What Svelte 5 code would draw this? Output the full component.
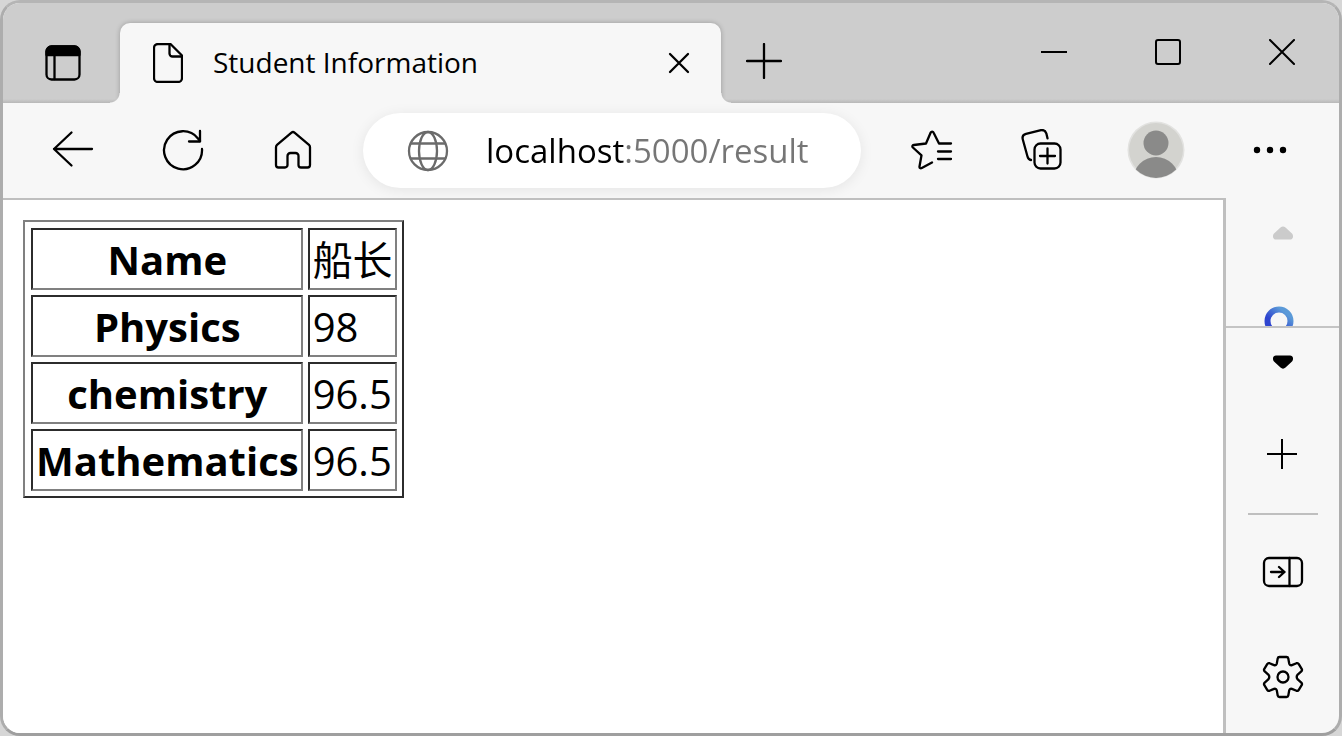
<script>
  let address = $state('localhost:5000/result');

  const student = [
    { label: 'Name', value: '船长' },
    { label: 'Physics', value: '98' },
    { label: 'chemistry', value: '96.5' },
    { label: 'Mathematics', value: '96.5' }
  ];
</script>

<div class="window">
  <header class="titlebar">
    <button class="tab-actions" aria-label="Tab actions menu">
      <svg width="36" height="36" viewBox="0 0 36 36">
        <rect x="1.5" y="1.5" width="33" height="33" rx="5" />
        <path d="M1.5 10V6.5a5 5 0 0 1 5-5h23a5 5 0 0 1 5 5V10z" fill="currentColor" />
        <path d="M9.5 10v24" />
      </svg>
    </button>

    <div class="tab">
      <svg width="30" height="40" viewBox="0 0 30 40">
        <path d="M5 1h12.5L29 12.5V35a4 4 0 0 1-4 4H5a4 4 0 0 1-4-4V5a4 4 0 0 1 4-4z" />
        <path d="M16.5 1v9.5a3 3 0 0 0 3 3H29" />
      </svg>
      <span class="tab-title">Student Information</span>
      <button class="tab-close" aria-label="Close tab">
        <svg width="22" height="22" viewBox="0 0 22 22">
          <path d="M2 2l18 18M20 2L2 20" />
        </svg>
      </button>
    </div>

    <button class="new-tab" aria-label="New tab">
      <svg width="36" height="36" viewBox="0 0 36 36">
        <path d="M18 1v34M1 18h34" />
      </svg>
    </button>

    <div class="window-controls">
      <button aria-label="Minimize">
        <svg width="26" height="26" viewBox="0 0 26 26"><path d="M1 13h24" /></svg>
      </button>
      <button aria-label="Maximize">
        <svg width="26" height="26" viewBox="0 0 26 26">
          <rect x="1" y="1" width="24" height="24" rx="2" />
        </svg>
      </button>
      <button aria-label="Close">
        <svg width="26" height="26" viewBox="0 0 26 26">
          <path d="M1 1l24 24M25 1L1 25" />
        </svg>
      </button>
    </div>
  </header>

  <nav class="toolbar">
    <div class="nav-buttons">
      <button aria-label="Back">
        <svg width="42" height="42" viewBox="0 0 42 42">
          <path d="M40 20H2M19.500 3.500L2 20l17.500 16.500" />
        </svg>
      </button>
      <button aria-label="Refresh">
        <svg width="42" height="42" viewBox="0 0 42 42">
          <path d="M40 20a19 19 0 1 1-4-10.500L38 12" />
          <path d="M38 2v10.500H27" />
        </svg>
      </button>
      <button aria-label="Home">
        <svg width="42" height="42" viewBox="0 0 42 42">
          <path d="M19.500 3.600L5 15.800c-.8.700-1 1.500-1 2.400V36a2.500 2.500 0 0 0 2.500 2.500H13a2.500 2.500 0 0 0 2.500-2.500V27a3 3 0 0 1 3-3h5a3 3 0 0 1 3 3v9a2.500 2.500 0 0 0 2.500 2.500h6.500A2.500 2.500 0 0 0 38 36V18.200c0-.9-.3-1.700-1-2.400L22.500 3.600a2.300 2.300 0 0 0-3 0z" />
        </svg>
      </button>
    </div>

    <div class="address-bar">
      <svg width="42" height="42" viewBox="0 0 42 42">
        <circle cx="21" cy="21" r="19" />
        <ellipse cx="21" cy="21" rx="9" ry="19" />
        <path d="M4 13.500h34M4 28.500h34" />
      </svg>
      <input type="text" aria-label="Address bar" spellcheck="false" bind:value={address} />
    </div>

    <div class="tool-buttons">
      <button aria-label="Favorites">
        <svg width="42" height="42" viewBox="0 0 42 42">
          <path d="M40 14.500H28L22.500 3.500c-.5-1.300-2.200-1.300-2.800 0L15 14.500 2.800 16c-1.400.2-1.900 1.500-.9 2.500l8.600 7.800-2 11.200c-.2 1.500 1 2.300 2.300 1.600L21 33.500" />
          <path d="M27 22.500h13M27 30h13" />
        </svg>
      </button>
      <button aria-label="Collections">
        <svg width="46" height="42" viewBox="1 0 46 42">
          <rect x="14.500" y="14.500" width="26" height="25" rx="6" />
          <path d="M27.500 19.500v15M20 27h15" />
          <path d="M11 31c-2-.3-3-1.500-3.500-3.500L2.800 10.500C2 7.500 3.500 5.500 6 4.800l14-3.500c3-.7 5.500.5 6.300 3l1.200 5" />
        </svg>
      </button>
      <button aria-label="Profile">
        <svg class="avatar" width="58" height="58" viewBox="0 0 58 58">
          <clipPath id="face"><circle cx="29" cy="29" r="28" /></clipPath>
          <circle cx="29" cy="29" r="28.500" fill="#e2e2e0" />
          <circle cx="29" cy="29" r="27" fill="#d3d3cf" />
          <g clip-path="url(#face)" fill="#8a8a89">
            <circle cx="29" cy="22" r="12.500" />
            <circle cx="29" cy="59" r="23" />
          </g>
        </svg>
      </button>
      <button aria-label="Settings and more">
        <svg class="solid" width="38" height="8" viewBox="-4 0 38 8">
          <circle cx="4" cy="4" r="3.200" />
          <circle cx="17" cy="4" r="3.200" />
          <circle cx="30" cy="4" r="3.200" />
        </svg>
      </button>
    </div>
  </nav>

  <div class="body">
    <main>
      <table>
        <tbody>
          {#each student as row}
            <tr>
              <th scope="row">{row.label}</th>
              <td>{row.value}</td>
            </tr>
          {/each}
        </tbody>
      </table>
    </main>

    <aside>
      <button class="scroll-up" aria-label="Scroll up" disabled>
        <svg class="solid" width="20" height="14" viewBox="0 0 20 14">
          <path d="M7.500 1.500L1 7.500c-2 2.500-1 6 2 6h14c3 0 4-3.500 2-6l-6.500-6c-1.500-1.500-3.500-1.500-5 0z" />
        </svg>
      </button>
      <div class="apps">
        <button aria-label="Sidebar app">
          <svg width="30" height="30" viewBox="0 0 30 30">
            <defs>
              <linearGradient id="ring" x1="0" y1="0.700" x2="0.600" y2="0">
                <stop offset="0.300" stop-color="#2e45cf" />
                <stop offset="1" stop-color="#5b9ad8" />
              </linearGradient>
            </defs>
            <circle cx="15" cy="15" r="11.500" stroke="url(#ring)" stroke-width="6" />
          </svg>
        </button>
      </div>
      <button class="scroll-down" aria-label="Scroll down">
        <svg class="solid" width="20" height="14" viewBox="0 0 20 14">
          <path d="M7.500 12.500L1 6.500c-2-2.500-1-6 2-6h14c3 0 4 3.500 2 6l-6.500 6c-1.500 1.500-3.500 1.500-5 0z" />
        </svg>
      </button>
      <button class="add" aria-label="Customize sidebar">
        <svg width="30" height="30" viewBox="0 0 30 30"><path d="M15 1v28M1 15h28" /></svg>
      </button>
      <hr />
      <div class="aside-bottom">
        <button aria-label="Hide sidebar">
          <svg width="42" height="32" viewBox="0 0 42 32">
            <rect x="2" y="2" width="38" height="28" rx="5" />
            <path d="M27.500 2v28M9 16h13.500M17 11l5.500 5-5.500 5" />
          </svg>
        </button>
        <button aria-label="Sidebar settings">
          <svg width="42" height="44" viewBox="0 0 42 44">
            <path d="M17.500 2h7q1.500 0 1.800 1.500l.9 5q.5 2.200 2.700 1.600l4.600-1.900q1.500-.5 2.300.9l3 5q.6 1.200-.5 2.200l-3.600 3.300q-2 2.400 0 4.800l3.600 3.300q1.100 1 .5 2.200l-3 5q-.8 1.400-2.300.9l-4.600-1.900q-2.200-.6-2.700 1.600l-.9 5q-.3 1.500-1.800 1.500h-7q-1.500 0-1.800-1.500l-.9-5q-.5-2.200-2.700-1.600l-4.600 1.900q-1.500.5-2.300-.9l-3-5q-.6-1.200.5-2.200l3.600-3.300q2-2.400 0-4.800l-3.600-3.300q-1.100-1-.5-2.200l3-5q.8-1.400 2.300-.9l4.600 1.900q2.200.6 2.700-1.600l.9-5Q16 2 17.500 2z" />
            <circle cx="21" cy="22" r="5.500" />
          </svg>
        </button>
      </div>
    </aside>
  </div>
</div>

<style>
  :global(body) {
    background: #d6d6d6;
  }

  .window {
    box-sizing: border-box;
    min-height: 100vh;
    display: flex;
    flex-direction: column;
    overflow: hidden;
    background: #f7f7f7;
    border: 3px solid #adadad;
    border-top-color: #b5b5b5;
    border-bottom-color: #9f9f9f;
    border-radius: 20px;
    color: #000;
    font-family: 'Open Sans', 'Noto Sans CJK SC', sans-serif;
  }

  button {
    display: flex;
    align-items: center;
    justify-content: center;
    padding: 0;
    border: none;
    background: transparent;
    color: inherit;
  }

  svg {
    flex: none;
    fill: none;
    stroke: currentColor;
    stroke-width: 2.3;
    stroke-linecap: round;
    stroke-linejoin: round;
  }

  .solid {
    fill: currentColor;
    stroke: none;
  }

  .window-controls svg,
  .add svg {
    stroke-width: 2;
    stroke-linecap: square;
  }

  /* title bar */
  .titlebar {
    display: flex;
    height: 100px;
    overflow: hidden;
    background: linear-gradient(to top, #b8b8b8, #cdcdcd 4px);
  }

  .tab-actions {
    width: 117px;
    padding: 20px 0 0 2px;
  }

  .tab {
    position: relative;
    box-sizing: border-box;
    flex: 0 1 601px;
    display: flex;
    align-items: center;
    gap: 30px;
    margin-top: 20px;
    padding: 0 20px 0 33px;
    background: #f7f7f7;
    border-radius: 10px 10px 0 0;
    box-shadow: 0 0 5px rgba(0, 0, 0, 0.25);
  }

  /* flared feet of the active tab */
  .tab::before,
  .tab::after {
    content: '';
    position: absolute;
    bottom: 0;
    width: 10px;
    height: 10px;
  }

  .tab::before {
    right: 100%;
    background: radial-gradient(circle at 0 0, transparent 9px, #f7f7f7 10px);
  }

  .tab::after {
    left: 100%;
    background: radial-gradient(circle at 100% 0, transparent 9px, #f7f7f7 10px);
  }

  .tab-title {
    flex: 1;
    padding-bottom: 2px;
    font-size: 28px;
    line-height: 40px;
    white-space: nowrap;
    overflow: hidden;
  }

  .tab-close {
    width: 44px;
    height: 44px;
  }

  .new-tab {
    width: 86px;
    padding-top: 16px;
  }

  .window-controls {
    display: flex;
    margin-left: auto;
  }

  .window-controls button {
    width: 114px;
    padding-bottom: 2px;
  }

  /* toolbar */
  .toolbar {
    display: flex;
    align-items: center;
    height: 95px;
    padding: 0 15px;
  }

  .nav-buttons,
  .tool-buttons {
    display: flex;
    padding-bottom: 2px;
  }

  .nav-buttons button {
    width: 110px;
    height: 74px;
  }

  .tool-buttons button {
    width: 112px;
    height: 74px;
  }

  .avatar {
    stroke: none;
  }

  .address-bar {
    box-sizing: border-box;
    flex: 1;
    display: flex;
    align-items: center;
    gap: 37px;
    min-width: 0;
    height: 75px;
    margin: 0 15px;
    padding: 0 36px 0 44px;
    background: #fff;
    border-radius: 38px;
    box-shadow: 0 2px 14px rgba(0, 0, 0, 0.08);
  }

  .address-bar svg {
    color: #6b6b6b;
  }

  /* host in black, the rest of the address in grey */
  .address-bar input {
    flex: 1;
    min-width: 0;
    padding: 0;
    border: none;
    outline: none;
    background: linear-gradient(to right, #000 138px, #767676 138px);
    background-clip: text;
    -webkit-background-clip: text;
    color: transparent;
    caret-color: #000;
    font-family: inherit;
    font-size: 33px;
    line-height: 48px;
  }

  /* page and sidebar */
  .body {
    flex: 1;
    display: flex;
  }

  main {
    flex: 1;
    padding: 20px;
    background: #fff;
    border-top: 2px solid #bfbfbf;
    border-right: 3px solid #bfbfbf;
  }

  table {
    padding: 1px 0 0 1px;
    border: 2px solid;
    border-color: #808080 #2c2c2c #2c2c2c #808080;
    border-spacing: 5px;
    font-size: 40px;
    line-height: 52px;
  }

  th,
  td {
    padding: 4px 2px 2px 3px;
    border: 2px solid;
    border-color: #2c2c2c #808080 #808080 #2c2c2c;
  }

  th {
    font-weight: 700;
    text-align: center;
  }

  aside {
    width: 113px;
    display: flex;
    flex-direction: column;
  }

  .scroll-up {
    height: 70px;
    color: #cbcbcb;
  }

  .apps {
    display: flex;
    justify-content: center;
    align-items: flex-start;
    height: 20px;
    padding: 38px 8px 0 0;
    overflow: hidden;
    border-bottom: 2px solid #c4c4c4;
  }

  .scroll-down {
    height: 68px;
  }

  .add {
    height: 117px;
    padding: 0 2px 2px 0;
  }

  hr {
    width: 70px;
    height: 2px;
    margin: 0 auto;
    border: none;
    background: #bfbfbf;
  }

  .aside-bottom {
    margin-top: auto;
    padding-bottom: 4px;
  }

  .aside-bottom button {
    width: 100%;
    height: 105px;
  }
</style>
